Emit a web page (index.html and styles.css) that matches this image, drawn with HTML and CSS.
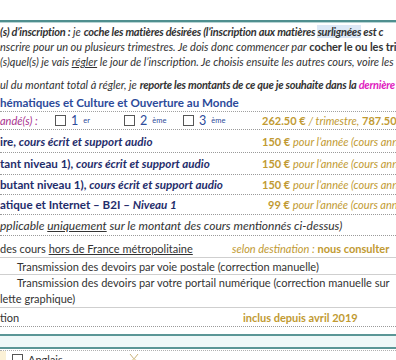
FILE: index.html
```html
<!DOCTYPE html>
<html lang="fr">
<head>
<meta charset="utf-8">
<link rel="stylesheet" href="styles.css">
</head>
<body>
<div class="page">
  <div class="rule-top"></div>
  <div class="intro">
    <div class="pl"><b class="bi">(s) d’inscription :</b> <i>je</i> <b class="bi">coche les matières désirées (l’inscription aux matières <span class="hl">surlignées</span> est c</b></div>
    <div class="pl"><i>nscrire pour un ou plusieurs trimestres. Je dois donc commencer par</i> <b class="bb">cocher le ou les trim</b></div>
    <div class="pl"><i>(s)quel(s) je vais <u>régler</u> le jour de l’inscription. Je choisis ensuite les autres cours, voire les</i></div>
    <div class="pl gap"><i>ul du montant total à régler, je</i> <b class="bi">reporte les montants de ce que je souhaite dans la <span class="mag">dernière</span></b></div>
  </div>
  <div class="heading">hématiques et Culture et Ouverture au Monde</div>
  <div class="row dot r-check">
    <div class="c1 checks"><i class="purple lbl">andé(s) :</i>
      <span class="chk w1"><span class="box"></span>1<sup>er</sup></span>
      <span class="chk w2"><span class="box"></span>2<sup>ème</sup></span>
      <span class="chk"><span class="box"></span>3<sup>ème</sup></span>
    </div>
    <div class="c2 gold"><b>262.50 €</b> <i>/ trimestre,</i> <b>787.50 €</b> <i>l’année</i></div>
  </div>
  <div class="row dot r-a">
    <div class="c1 navy"><b>ire, <i>cours écrit et support audio</i></b></div>
    <div class="c2 gold"><b>150 €</b> <i>pour l’année (cours annuel)</i></div>
  </div>
  <div class="row dot r-b">
    <div class="c1 navy"><b>tant niveau 1), <i>cours écrit et support audio</i></b></div>
    <div class="c2 gold"><b>150 €</b> <i>pour l’année (cours annuel)</i></div>
  </div>
  <div class="row dot r-c">
    <div class="c1 navy"><b>butant niveau 1), <i>cours écrit et support audio</i></b></div>
    <div class="c2 gold"><b>150 €</b> <i>pour l’année (cours annuel)</i></div>
  </div>
  <div class="row dot r-d">
    <div class="c1 navy"><b>atique et Internet – B2I – <i>Niveau 1</i></b></div>
    <div class="c2 gold c2-99"><b>99 €</b> <i>pour l’année (cours annuel)</i></div>
  </div>
  <div class="row dot r-e">
    <div class="c1 full note"><i>pplicable <u>uniquement</u> sur le montant des cours mentionnés ci-dessus)</i></div>
  </div>
  <div class="row solid r-f">
    <div class="c1 plain">des cours <u>hors de France métropolitaine</u></div>
    <div class="c2 gold c2-dest"><i>selon destination :</i> <b>nous consulter</b></div>
  </div>
  <div class="row solid r-g">
    <div class="c1 full plain indent">Transmission des devoirs par voie postale (correction manuelle)</div>
  </div>
  <div class="row solid r-h">
    <div class="c1 full plain">
      <div class="indent">Transmission des devoirs par votre portail numérique (correction manuelle sur</div>
      <div>lette graphique)</div>
    </div>
  </div>
  <div class="row dot r-i">
    <div class="c1 plain">tion</div>
    <div class="c2 gold c2-inc"><b>inclus depuis avril 2019</b></div>
  </div>
  <div class="band"></div>
  <div class="last">
    <div class="beige"></div>
    <span class="chk lang"><span class="box"></span>Anglais</span>
    <svg class="deco" width="12" height="12" viewBox="0 0 12 12">
      <path d="M2 1 L6 6 L10 1" fill="none" stroke="#c9b27a" stroke-width="1"/>
      <circle cx="6" cy="8" r="2.5" fill="#e9dcb5"/>
    </svg>
  </div>
</div>
</body>
</html>
```

FILE: styles.css
```css
html, body {
  margin: 0;
  padding: 0;
  background: #ffffff;
}
.page {
  width: 396px;
  height: 360px;
  overflow: hidden;
  font-family: Lato, "Liberation Sans", sans-serif;
  font-size: 11px;
  color: #333333;
  padding-top: 20px;
  box-sizing: border-box;
}
.rule-top {
  height: 2px;
  background: #4f8f8f;
  border-bottom: 1px solid #b8d4d4;
}
.intro {
  padding-top: 1px;
}
.pl {
  white-space: nowrap;
  line-height: 15px;
  height: 15px;
}
.pl.gap {
  margin-top: 8px;
}
.bi {
  font-style: italic;
  font-weight: 700;
  letter-spacing: -0.25px;
}
.bb {
  font-weight: 700;
  letter-spacing: -0.1px;
}
.hl {
  background: #dce8f6;
}
.mag {
  color: #e01cc0;
}
.heading {
  font-size: 11.6px;
  font-weight: 700;
  color: #2c4a9a;
  line-height: 16px;
  height: 17px;
  box-sizing: border-box;
  margin-top: 3px;
  white-space: nowrap;
  border-bottom: 1px dotted #a0a0a0;
}
.row {
  display: flex;
  align-items: center;
  white-space: nowrap;
  box-sizing: border-box;
}
.row.dot {
  border-bottom: 1px dotted #9a9a9a;
}
.row.solid {
  border-bottom: 1px solid #cfcfcf;
}
.r-check { height: 18px; }
.r-a { height: 23px; }
.r-b { height: 22px; }
.r-c { height: 20px; }
.r-d { height: 20px; }
.r-e { height: 21px; }
.r-f { height: 22px; padding-top: 4px; }
.r-g { height: 17px; }
.r-h { height: 33px; line-height: 16px; }
.r-i { height: 19px; }
.c1 {
  width: 262px;
  flex: none;
  overflow: hidden;
}
.c1.full {
  width: 396px;
}
.note {
  font-size: 12px;
}
.c2 {
  flex: none;
}
.c2-99 {
  padding-left: 6px;
}
.c2-dest {
  margin-left: -30px;
}
.c2-inc {
  margin-left: -19px;
}
.navy {
  color: #1f2d6b;
  font-size: 11.6px;
}
.purple {
  color: #a8308e;
}
.gold {
  color: #c19a32;
}
.plain {
  color: #333333;
}
.indent {
  padding-left: 17px;
}
.checks {
  color: #2c4a9a;
  display: flex;
  align-items: center;
  font-size: 12.5px;
}
.lbl {
  display: inline-block;
  width: 55px;
  font-size: 11px;
}
.chk {
  display: inline-flex;
  align-items: center;
  gap: 5px;
  flex: none;
}
.w1 { width: 69px; }
.w2 { width: 59px; }
.box {
  width: 9px;
  height: 9px;
  border: 1px solid #555555;
  display: inline-block;
}
sup {
  font-size: 7.5px;
}
.band {
  margin-top: 7px;
  height: 15px;
  box-sizing: border-box;
  border-top: 2px solid #5a9696;
  border-bottom: 2px solid #5a9696;
  background: #eef8f8;
}
.last {
  display: flex;
  align-items: center;
  height: 16px;
  margin-top: 1px;
  border-top: 1px dotted #b0b0b0;
}
.beige {
  width: 6px;
  height: 16px;
  background: #fbf1d6;
}
.lang {
  color: #333333;
  margin-left: 6px;
}
.deco {
  margin-left: 65px;
}
```
